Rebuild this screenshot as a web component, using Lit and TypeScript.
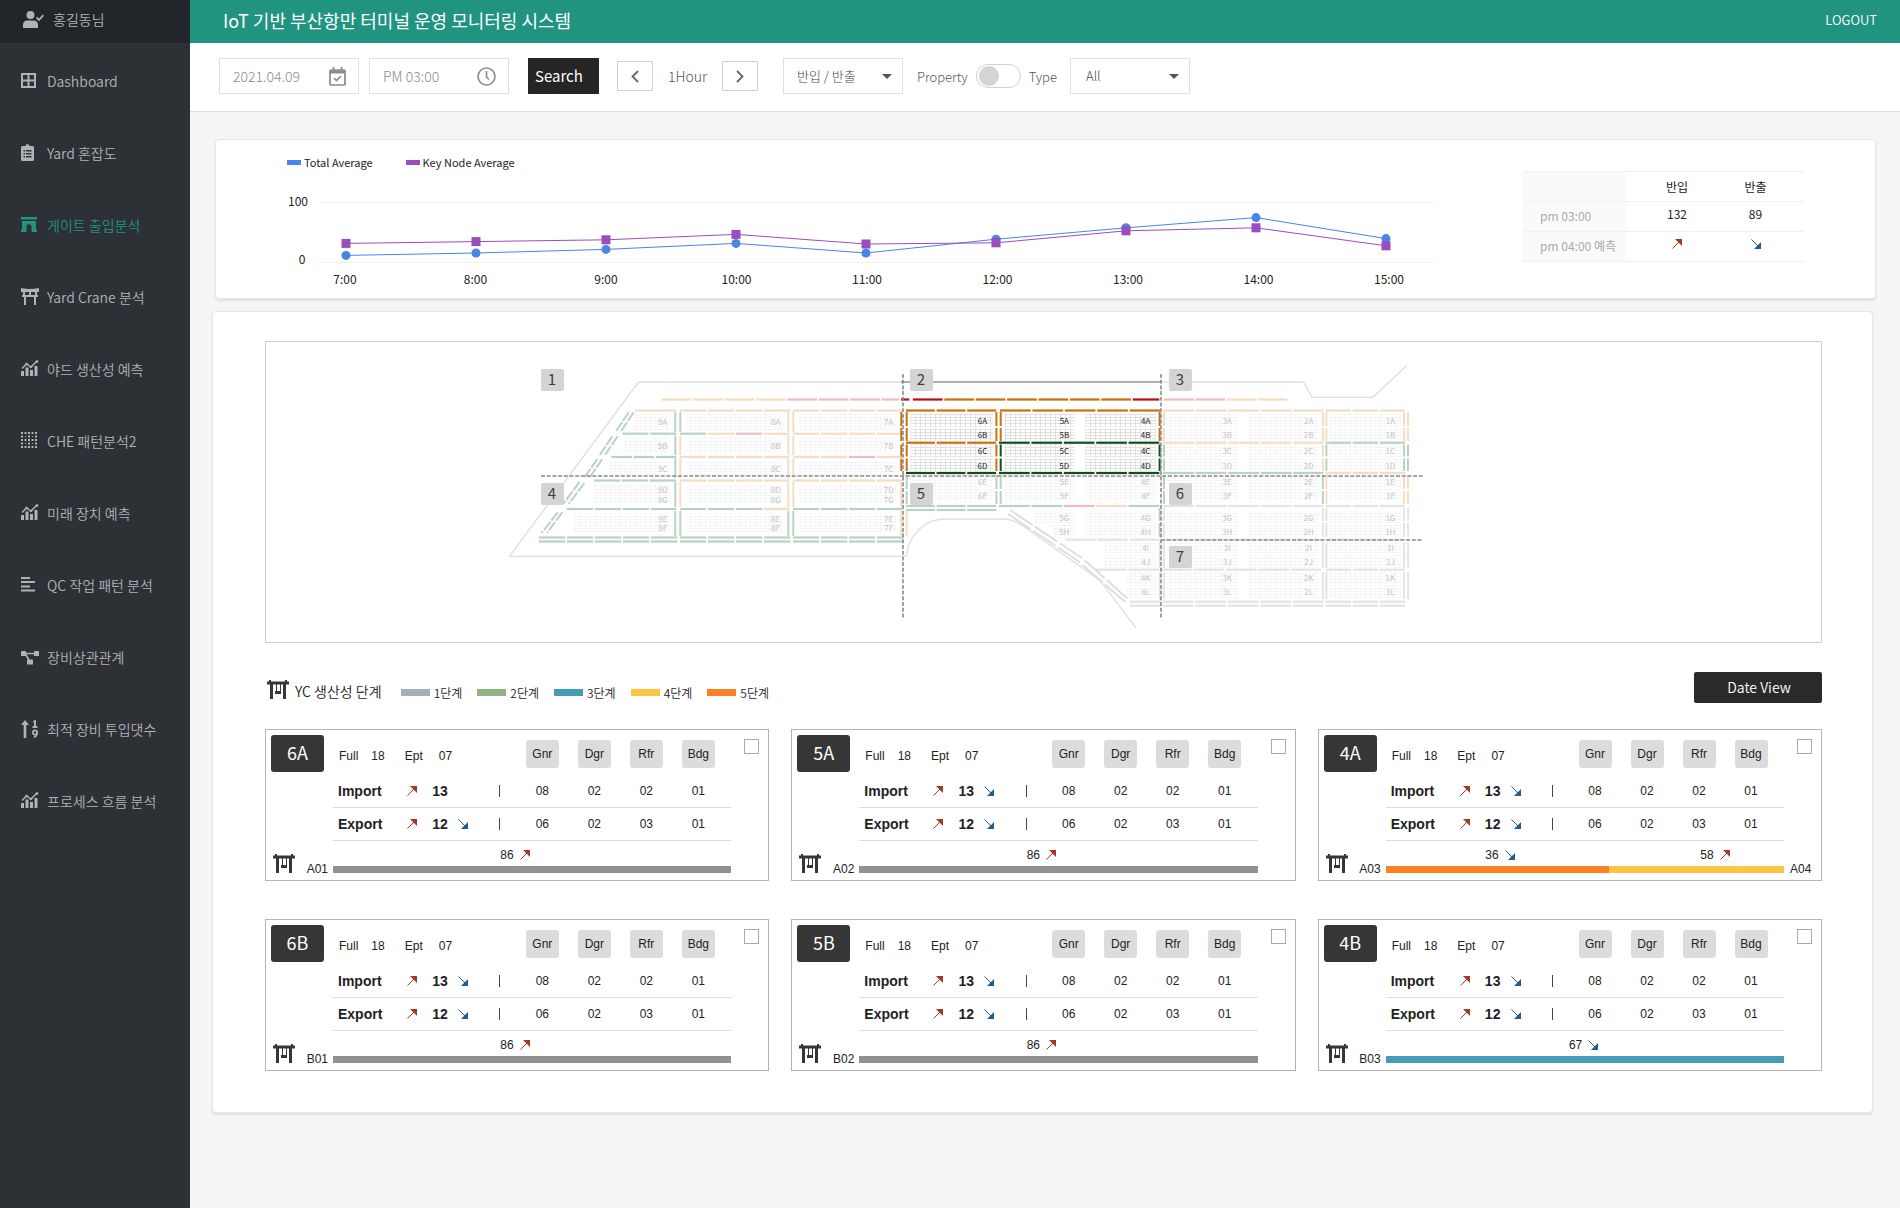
import { LitElement, html, svg, css, nothing } from "lit";
import { customElement, property, state } from "lit/decorators.js";
import { classMap } from "lit/directives/class-map.js";

type Dir = "up" | "down";

const arrow = (dir: Dir) => html`
  <svg class="arrow ${dir}" width="10" height="10" viewBox="0 0 10 10" role="img" aria-label=${dir}>
    ${dir === "up"
      ? svg`<path d="M3 0H10V7Z" fill="currentColor" /><path d="M0.5 9.5L7 3" stroke="currentColor" />`
      : svg`<path d="M3 10H10V3Z" fill="currentColor" /><path d="M0.5 0.5L7 7" stroke="currentColor" />`}
  </svg>
`;

const crane = html`
  <svg class="crane" width="22" height="19" viewBox="0 0 22 19" aria-hidden="true">
    <path
      fill="#363636"
      d="M2 0H4V1.5H18V0H20V1.5H22V4.5H19V19H16V4.5H14V14H8V11H9V4.5H6V19H3V4.5H0V1.5H2ZM10 4.5V11H13V4.5Z"
    />
  </svg>
`;

const trendIcon = svg`
  <path d="M1 8.5L5.5 4L10 7L16 1" fill="none" stroke="currentColor" stroke-width="1.5" />
  <circle cx="5.5" cy="4" r="1.3" /><circle cx="10" cy="7" r="1.3" /><circle cx="16" cy="1.6" r="1.3" />
  <rect x="0" y="11" width="3" height="5" /><rect x="4.5" y="7.5" width="3" height="8.5" />
  <rect x="9" y="10" width="3" height="6" /><rect x="13.5" y="6" width="3" height="10" />`;

const menu = [
  {
    label: "Dashboard",
    icon: svg`<path fill-rule="evenodd" d="M0 1H15V16H0ZM2 3V7.5H6.5V3ZM8.5 3V7.5H13V3ZM2 9.5V14H6.5V9.5ZM8.5 9.5V14H13V9.5Z" />`,
  },
  {
    label: "Yard 혼잡도",
    icon: svg`<path fill-rule="evenodd" d="M1.5 2H4.5C4.5 -0.5 8.5 -0.5 8.5 2H11.5Q13 2 13 3.5V15.5Q13 17 11.5 17H1.5Q0 17 0 15.5V3.5Q0 2 1.5 2ZM2.5 6V7.5H4V6ZM5 6V7.5H10.5V6ZM2.5 9V10.5H4V9ZM5 9V10.5H10.5V9ZM2.5 12V13.5H4V12ZM5 12V13.5H10.5V12Z" />`,
  },
  {
    label: "게이트 출입분석",
    active: true,
    icon: svg`<path d="M0 1H16V3.5H0ZM1 5H15V14H16V16H10.5V11C10.5 7.3 5.5 7.3 5.5 11V16H0V14H1Z" />`,
  },
  {
    label: "Yard Crane 분석",
    icon: svg`<path fill-rule="evenodd" d="M0 0Q9 1.8 18 0V4H16V7H17V9H15V17H13V9H5V17H3V9H1V7H2V4H0ZM4 4V7H8V4ZM10 4V7H14V4Z" />`,
  },
  { label: "야드 생산성 예측", icon: trendIcon },
  {
    label: "CHE 패턴분석2",
    icon: svg`
      <path d="M1 0V16M8 0V16M15 0V16" stroke="currentColor" stroke-width="2" stroke-dasharray="2 1.5" />
      <path d="M3.5 1H12.5M3.5 8H12.5M3.5 15H12.5" stroke="currentColor" stroke-width="2" stroke-dasharray="2 5" />
      <path d="M4 4H5V5H4ZM11 4H12V5H11ZM4 11H5V12H4ZM11 11H12V12H11Z" />`,
  },
  { label: "미래 장치 예측", icon: trendIcon },
  {
    label: "QC 작업 패턴 분석",
    icon: svg`<path d="M0 1H9V3H0ZM0 5H14V7H0ZM0 9.5H9V11.5H0ZM0 13.5H14V15.5H0Z" />`,
  },
  {
    label: "장비상관관계",
    icon: svg`
      <rect x="0" y="3" width="5" height="5" rx="0.5" /><rect x="13" y="3" width="5" height="5" rx="0.5" />
      <rect x="6" y="11.5" width="6" height="5" rx="0.5" /><path d="M4 5.5H14M4.5 6L8 12" stroke="currentColor" stroke-width="1.6" />`,
  },
  {
    label: "최적 장비 투입댓수",
    icon: svg`
      <path d="M4 0L8 5H5.3V18H2.7V5H0Z" />
      <path d="M12 1L14 0H15V6H16.5V8H11.5V6H13V2.2H12Z" />
      <circle cx="14" cy="12.5" r="2.1" fill="none" stroke="currentColor" stroke-width="1.8" />
      <path fill="none" stroke="currentColor" stroke-width="1.8" d="M16.1 12.5Q16.1 15.5 13 17.5" />`,
  },
  { label: "프로세스 흐름 분석", icon: trendIcon },
];

/* ---------- hourly averages ---------- */

const hours = ["7:00", "8:00", "9:00", "10:00", "11:00", "12:00", "13:00", "14:00", "15:00"];
const totalAverage = [11, 15, 21, 31, 15, 38, 57, 74, 39];
const nodeAverage = [31, 34, 37, 46, 30, 32, 52, 57, 27];

@customElement("average-chart")
export class AverageChart extends LitElement {
  static styles = css`
    :host {
      display: block;
      color: #222;
      font-size: 12px;
    }
    .legend {
      display: flex;
      gap: 33px;
      padding: 14px 0 0 71px;
      font-size: 11px;
      line-height: 16px;
    }
    .entry {
      display: flex;
      align-items: center;
      gap: 3px;
    }
    .swatch {
      width: 14px;
      height: 5px;
    }
    .total {
      background: #4a84e8;
    }
    .node {
      background: #9a4dbd;
    }
    .plot {
      display: block;
      width: 100%;
    }
    .plot text {
      text-anchor: middle;
      fill: #222;
    }
  `;

  render() {
    const x = (i: number) => 129 + i * 130;
    const y = (v: number) => 92 - v * 0.6;
    const points = (values: number[]) => values.map((v, i) => `${x(i)},${y(v)}`).join(" ");
    return html`
      <div class="legend">
        <span class="entry"><i class="swatch total"></i>Total Average</span>
        <span class="entry"><i class="swatch node"></i>Key Node Average</span>
      </div>
      <svg class="plot" viewBox="-1 0 1307 120" role="img" aria-label="Average by hour">
        <path d="M102 32.5H1217M102 92.5H1217" stroke="#f0f0f0" />
        <text x="81" y="36">100</text>
        <text x="85" y="94">0</text>
        <polyline points=${points(totalAverage)} fill="none" stroke="#4a84e8" />
        <polyline points=${points(nodeAverage)} fill="none" stroke="#9a4dbd" />
        ${totalAverage.map((v, i) => svg`<circle cx=${x(i)} cy=${y(v)} r="4.5" fill="#4a84e8" />`)}
        ${nodeAverage.map(
          (v, i) => svg`<rect x=${x(i) - 4.5} y=${y(v) - 4.5} width="9" height="9" fill="#9a4dbd" />`,
        )}
        ${hours.map((h, i) => svg`<text x=${128 + i * 130.5} y="114">${h}</text>`)}
      </svg>
    `;
  }
}

/* ---------- terminal map ---------- */

const road: Record<string, string> = {
  o: "#f4ddc2",
  g: "#bad2c2",
  p: "#efbcc0",
  e: "#e4e4e4",
  O: "#cb700c",
  G: "#0d4f1e",
  R: "#b41014",
};

/* A row of road sections: y, first x, last x, section pitch, one colour key per section (the last one repeats). */
const rows: [number, number, number, number, string][] = [
  [399.5, 661.7, 901, 31.4, "oooop"],
  [399.5, 901, 911, 31.4, "R"],
  [399.5, 912.9, 1161, 31.4, "ROOOOOOR"],
  [399.5, 1164, 1289, 31.4, "ppoo"],
  [410.5, 635, 678, 60, "o"],
  [410.5, 680, 793, 28, "o"],
  [410.5, 793, 904, 28, "o"],
  [433.7, 622.3, 678, 28, "g"],
  [433.7, 680, 791, 28, "gopo"],
  [433.7, 793, 904, 28, "o"],
  [457, 611.3, 678, 22.3, "g"],
  [457, 680, 791, 28, "o"],
  [457, 793, 904, 28, "oopo"],
  [480.5, 594, 678, 28, "g"],
  [480.5, 680, 791, 28, "o"],
  [480.5, 793, 904, 28, "o"],
  [509, 566.7, 678, 28, "g"],
  [509, 680, 791, 28, "gggo"],
  [509, 793, 904, 28, "g"],
  [537.5, 539, 680, 28, "g"],
  [537.5, 680, 793, 28, "g"],
  [537.5, 793, 905, 28, "g"],
  [541.5, 539, 680, 28, "g"],
  [541.5, 680, 793, 28, "g"],
  [541.5, 793, 905, 28, "g"],
  [410.5, 906, 998, 30.6, "O"],
  [410.5, 1000, 1162, 32.4, "O"],
  [442.7, 906, 998, 30.6, "O"],
  [442.7, 999, 1162, 32.4, "G"],
  [473, 906, 998, 30.6, "G"],
  [473, 999, 1162, 32.4, "G"],
  [506, 906, 998, 30.6, "g"],
  [506, 999, 1162, 32.4, "ggpog"],
  [510, 906, 998, 30.6, "g"],
  [410.5, 1163, 1325, 32.6, "o"],
  [410.5, 1325.7, 1407, 27, "o"],
  [442.7, 1163, 1325, 32.6, "o"],
  [442.7, 1325.7, 1407, 27, "g"],
  [473, 1163, 1325, 32.6, "g"],
  [473, 1325.7, 1407, 27, "o"],
  [506, 1163, 1325, 32.6, "e"],
  [506, 1325.7, 1407, 27, "e"],
  [539.7, 1065, 1325, 32.4, "e"],
  [539.7, 1325.7, 1407, 27, "e"],
  [569.7, 1096, 1325, 32.4, "e"],
  [569.7, 1325.7, 1407, 27, "e"],
  [601.7, 1130, 1325, 32.6, "e"],
  [601.7, 1325.7, 1407, 27, "e"],
  [605.7, 1130, 1325, 32.6, "e"],
  [605.7, 1325.7, 1407, 27, "e"],
];

/* Upright roads: x, then a colour key for each block row ("-" leaves the row empty). */
const westRows = [[412, 432], [435.5, 455], [458.5, 478], [482, 507], [511, 536]];
const eastRows = [[412, 426], [428, 441], [444.5, 456.5], [458.5, 471], [475, 489], [491, 504], [508, 521], [523, 537], [542, 568], [572, 599]];
const westColumns: [number, string][] = [
  [675.3, "ggggg"], [680.3, "gooog"], [788.3, "oooog"], [793.3, "oooog"], [901.3, "---oo"], [906.7, "----o"],
];
const eastColumns: [number, string][] = [
  [901.3, "OOOO"], [906.7, "OOOOgg"], [996.4, "OOOOgg"], [1000.7, "OOGGgg"], [1159.6, "OOGG--ggee"], [1164, "ooggggeeee"],
  [1322.9, "ooooggeeee"], [1326.4, "ooggooeeee"], [1404, "ooggooeeee"], [1408, "ooggooeeee"],
];

const westLabels = [
  { y: 422.3, top: 414, h: 16, left: 634, names: "A" },
  { y: 445.7, top: 437, h: 16, left: 624.7, names: "B" },
  { y: 469, top: 461, h: 15, left: 609, names: "C" },
  { y: 490, top: 485, h: 18, left: 594, names: "DG" },
  { y: 518.6, top: 513.5, h: 19, left: 573.3, names: "EF" },
];
const eastLetters = "ABCDEFGHIJKL";
const eastY = [421, 435.3, 451.3, 465.7, 481.7, 495.7, 517.7, 532, 548, 562.3, 578.3, 592.3];

@customElement("terminal-map")
export class TerminalMap extends LitElement {
  static styles = css`
    :host {
      display: block;
      border: 1px solid #cfcfcf;
    }
    .map {
      display: block;
      width: 100%;
    }
    .block {
      font-size: 8px;
      text-anchor: middle;
      fill: #c4c4c4;
    }
    .block.on {
      fill: #222;
    }
    .zone {
      font-size: 15px;
      text-anchor: middle;
      fill: #3c3c3c;
    }
  `;

  private row([y, x0, x1, pitch, keys]: [number, number, number, number, string]) {
    const out = [];
    for (let i = 0, x = x0; x < x1 - 3; i++, x += pitch) {
      const key = keys[Math.min(i, keys.length - 1)];
      const w = Math.min(pitch, x1 - x) - 1.7;
      out.push(svg`<rect x=${x} y=${y - 1.1} width=${w} height="2.2" fill=${road[key]} />`);
    }
    return out;
  }

  private column(x: number, keys: string, spans: number[][]) {
    return [...keys].map((key, i) =>
      road[key]
        ? svg`<rect x=${x - 1} y=${spans[i][0]} width="2" height=${spans[i][1] - spans[i][0]} fill=${road[key]} />`
        : nothing,
    );
  }

  private westBlocks() {
    const columns = [
      { n: 9, x: 662.7, left: 0, right: 670 },
      { n: 8, x: 775.7, left: 686, right: 782.7 },
      { n: 7, x: 888.7, left: 799, right: 895.7 },
    ];
    return columns.map((c) =>
      westLabels.map((r) => {
        const left = c.left || r.left;
        return svg`
          <rect x=${left} y=${r.top} width=${c.right - left} height=${r.h} fill="url(#lots)" />
          ${[...r.names].map((l, i) => svg`<text class="block" x=${c.x} y=${r.y + 3 + i * 9.8}>${c.n}${l}</text>`)}`;
      }),
    );
  }

  private eastBlocks() {
    const columns = [
      { n: 6, x: 982.5, left: 910.5, right: 993, to: 6 },
      { n: 5, x: 1064.3, left: 1004.3, right: 1074.6, to: 8 },
      { n: 4, x: 1145.7, left: 1085.4, right: 1155.7, to: 12 },
      { n: 3, x: 1227.2, left: 1166.8, right: 1237.9, to: 12 },
      { n: 2, x: 1308.6, left: 1248.2, right: 1318.9, to: 12 },
      { n: 1, x: 1390.4, left: 1329.6, right: 1400.7, to: 12 },
    ];
    return columns.map((c) =>
      eastY.slice(0, c.to).map((y, i) => {
        const on = c.n > 3 && i < 4;
        let left = c.left;
        if (c.n === 5 && i > 5) left = 1034 + (i - 6) * 18;
        if (c.n === 4 && i > 7) left = i > 9 ? 1126 : 1105;
        return svg`
          <rect x=${left} y=${y - 7} width=${c.right - left} height="12.5" fill=${on ? "url(#lots-on)" : "url(#lots)"} />
          <text class="block ${on ? "on" : ""}" x=${c.x} y=${y + 3}>${c.n}${eastLetters[i]}</text>`;
      }),
    );
  }

  render() {
    const zones = [[541, 369], [910, 369], [1169, 369], [541, 483], [910, 483], [1169, 483], [1169, 546]];
    return html`
      <svg class="map" viewBox="266 342 1555 300" role="img" aria-label="Terminal yard map">
        <defs>
          <pattern id="lots" width="5" height="3" patternUnits="userSpaceOnUse">
            <path d="M0 0.5H5M0.5 0V3" stroke="#f5f5f5" stroke-width="1" />
          </pattern>
          <pattern id="lots-on" width="5" height="3" patternUnits="userSpaceOnUse">
            <path d="M0 0.5H5M0.5 0V3" stroke="#e0e0e0" stroke-width="1" />
          </pattern>
        </defs>
        <g fill="none" stroke="#dfdfdf" stroke-width="1.3">
          <path d="M903 382H638.5L509.5 556.4H906.5C908 535 925 519 945 519H1003Q1013 519 1023 526L1098 579Q1102 582 1105 587L1136 628" />
          <path d="M1161 382H1303.5L1312 397.3H1373L1407 365.3" />
        </g>
        <path d="M901 382H1161" stroke="#959595" stroke-width="1.6" />
        ${this.westBlocks()} ${this.eastBlocks()}
        ${rows.map((r) => this.row(r))}
        ${westColumns.map(([x, keys]) => this.column(x, keys, westRows))}
        ${eastColumns.map(([x, keys]) => this.column(x, keys, eastRows))}
        <g fill="none" stroke=${road.g} stroke-width="2" stroke-dasharray="10.5 1.5">
          <path d="M628.7 412.3L615.7 431.7M633.7 412.3L620.7 431.7" />
          <path d="M612.3 436.3L599.7 455.3M617.7 436.3L604.7 455.3" />
          <path d="M597.3 459L584.7 477.3M602.3 459L589.7 477.3" />
          <path d="M579.7 481.7L563.7 503.3M584.3 483L568.7 504" />
          <path d="M557.7 512.3L541.7 533M562.3 512.3L547 533" />
        </g>
        <g fill="none" stroke="#dedede" stroke-width="2" stroke-dasharray="27 3">
          <path d="M1010 510L1082 558L1129 600" />
          <path d="M1008 514L1078 561L1127 603.5" />
        </g>
        <g stroke="#8a8a8a" stroke-width="1.6" stroke-dasharray="4 1.7">
          <path d="M903 374V619M1161 374V619M541 476H1424M1161 540H1422" />
        </g>
        ${zones.map(
          ([x, y], i) => svg`
            <rect x=${x} y=${y} width="23" height="22" rx="2" fill="#d4d4d4" />
            <text class="zone" x=${x + 11} y=${y + 16}>${i + 1}</text>`,
        )}
      </svg>
    `;
  }
}

/* ---------- block cards ---------- */

interface Bar {
  color: string;
  share: number;
  indent: number;
  value: number;
  dir: Dir;
}

interface Block {
  name: string;
  start: string;
  end?: string;
  importDown: boolean;
  bars: Bar[];
}

const gray: Bar = { color: "#919191", share: 100, indent: 42, value: 86, dir: "up" };

const blocks: Block[] = [
  { name: "6A", start: "A01", importDown: false, bars: [gray] },
  { name: "5A", start: "A02", importDown: true, bars: [gray] },
  {
    name: "4A",
    start: "A03",
    end: "A04",
    importDown: true,
    bars: [
      { color: "#fc8024", share: 56, indent: 25, value: 36, dir: "down" },
      { color: "#fcc644", share: 44, indent: 23, value: 58, dir: "up" },
    ],
  },
  { name: "6B", start: "B01", importDown: true, bars: [gray] },
  { name: "5B", start: "B02", importDown: true, bars: [gray] },
  {
    name: "4B",
    start: "B03",
    importDown: true,
    bars: [{ color: "#479cb8", share: 100, indent: 46, value: 67, dir: "down" }],
  },
];

@customElement("block-card")
export class BlockCard extends LitElement {
  @property({ attribute: false }) block!: Block;

  static styles = css`
    :host {
      display: grid;
      grid-template-columns: 67px 1fr 37px;
      box-sizing: border-box;
      border: 1px solid #b4b4b4;
      padding-bottom: 4px;
      color: #222;
      font-family: "Liberation Sans", Arial, sans-serif;
      font-size: 12px;
      line-height: 14px;
    }
    .badge {
      margin: 5px 0 0 5px;
      width: 53px;
      height: 37px;
      border-radius: 3px;
      background: #363636;
      color: #fff;
      font: 18px/34px "Noto Sans CJK KR", sans-serif;
      text-align: center;
    }
    .stats {
      width: 100%;
      border-collapse: collapse;
      table-layout: fixed;
    }
    .name {
      width: 68px;
    }
    .count {
      width: 52px;
    }
    .last {
      width: 59px;
    }
    th,
    td {
      padding: 0;
      font-weight: normal;
      text-align: center;
    }
    thead th {
      height: 45px;
      vertical-align: top;
    }
    tbody tr {
      border-bottom: 1px solid #dcdcdc;
    }
    tbody th,
    tbody td {
      height: 32px;
    }
    tbody th {
      padding-left: 5px;
      font-size: 14px;
      font-weight: bold;
      text-align: left;
    }
    .totals {
      display: flex;
      gap: 13px;
      padding: 19px 0 0 6px;
    }
    .totals span:nth-child(3) {
      padding-left: 7px;
    }
    .totals span:nth-child(4) {
      padding-left: 3px;
    }
    .chip {
      display: block;
      width: 33px;
      margin: 10px auto 0;
      border-radius: 3px;
      background: #dcdcdc;
      line-height: 28px;
    }
    tr > :last-child {
      padding-right: 7px;
    }
    .flow {
      display: flex;
      align-items: center;
      padding-left: 6px;
    }
    .flow b {
      width: 16px;
      margin: 0 10px 0 15px;
      font-size: 14px;
    }
    .arrow {
      flex: none;
      color: #a23a24;
    }
    .arrow.down {
      color: #235c90;
    }
    .divider {
      width: 1px;
      height: 12px;
      margin: 0 16px 0 auto;
      background: #444;
    }
    .check {
      appearance: none;
      box-sizing: border-box;
      width: 15px;
      height: 15px;
      margin: 9px 9px 0 auto;
      border: 1px solid #aaa;
      background: #fff;
    }
    .check:checked {
      background: #363636;
    }
    .origin {
      display: flex;
      align-items: flex-end;
      justify-content: space-between;
      padding: 0 5px 0 7px;
    }
    .crane {
      margin-bottom: 3px;
    }
    .bars {
      display: flex;
      padding: 7px 0 3px;
    }
    .value {
      display: flex;
      align-items: center;
      gap: 6px;
      margin-bottom: 4px;
    }
    .bar {
      height: 7px;
    }
    .end {
      align-self: end;
      padding-left: 6px;
    }
  `;

  private line(label: string, total: string, down: boolean, counts: string[]) {
    return html`
      <tr>
        <th scope="row">${label}</th>
        <td>
          <div class="flow">
            ${arrow("up")}<b>${total}</b>${down ? arrow("down") : nothing}<i class="divider"></i>
          </div>
        </td>
        ${counts.map((c) => html`<td>${c}</td>`)}
      </tr>
    `;
  }

  render() {
    const b = this.block;
    return html`
      <div class="badge">${b.name}</div>
      <table class="stats">
        <colgroup>
          <col class="name" /><col /><col class="count" /><col class="count" /><col class="count" /><col class="last" />
        </colgroup>
        <thead>
          <tr>
            <th colspan="2">
              <div class="totals"><span>Full</span><span>18</span><span>Ept</span><span>07</span></div>
            </th>
            ${["Gnr", "Dgr", "Rfr", "Bdg"].map((c) => html`<th scope="col"><span class="chip">${c}</span></th>`)}
          </tr>
        </thead>
        <tbody>
          ${this.line("Import", "13", b.importDown, ["08", "02", "02", "01"])}
          ${this.line("Export", "12", true, ["06", "02", "03", "01"])}
        </tbody>
      </table>
      <input class="check" type="checkbox" aria-label="Select ${b.name}" />
      <div class="origin">${crane}<span>${b.start}</span></div>
      <div class="bars">
        ${b.bars.map(
          (s) => html`
            <div style="width:${s.share}%">
              <div class="value" style="padding-left:${(s.indent / s.share) * 100}%">${s.value}${arrow(s.dir)}</div>
              <div class="bar" style="background:${s.color}"></div>
            </div>
          `,
        )}
      </div>
      <div class="end">${b.end ?? nothing}</div>
    `;
  }
}

/* ---------- page ---------- */

const steps = [
  ["1단계", "#a4adbb"],
  ["2단계", "#8fb585"],
  ["3단계", "#479cb8"],
  ["4단계", "#fcc644"],
  ["5단계", "#fc8024"],
];

@customElement("app-root")
export class AppRoot extends LitElement {
  @state() private byType = false;

  static styles = css`
    :host {
      display: grid;
      grid-template-columns: 190px 1fr;
      min-height: 100vh;
      background: #f4f5f7;
      color: #222;
      font-family: "Noto Sans CJK KR", "Noto Sans", sans-serif;
      font-size: 14px;
    }
    button,
    input,
    select {
      box-sizing: border-box;
      margin: 0;
      font: inherit;
    }
    .side {
      background: #2d3035;
      color: #b0b3b5;
      font-weight: 350;
    }
    .user {
      display: flex;
      align-items: center;
      gap: 9px;
      height: 43px;
      padding: 0 0 5px 23px;
      box-sizing: border-box;
      background: #222529;
    }
    .menu {
      margin: 0;
      padding: 2px 0 0;
      list-style: none;
    }
    .link {
      display: grid;
      grid-template-columns: 26px 1fr;
      align-items: center;
      height: 72px;
      padding-left: 21px;
      color: inherit;
      text-decoration: none;
      white-space: nowrap;
    }
    .link.active {
      color: #209480;
    }
    .icon {
      fill: currentColor;
    }
    .top {
      display: flex;
      justify-content: space-between;
      align-items: center;
      height: 43px;
      box-sizing: border-box;
      padding: 0 23px 4px 33px;
      background: #209480;
      color: #fff;
    }
    .title {
      margin: 0;
      font-size: 18px;
      font-weight: 400;
    }
    .logout {
      color: inherit;
      font-size: 13px;
      font-weight: 350;
      text-decoration: none;
    }
    .tools {
      display: flex;
      align-items: center;
      height: 69px;
      box-sizing: border-box;
      padding: 0 29px 2px;
      border-bottom: 1px solid #dcdddf;
      background: #fff;
      color: #555;
      font-size: 13px;
      font-weight: 300;
    }
    .field {
      display: flex;
      align-items: center;
      justify-content: space-between;
      width: 140px;
      height: 36px;
      box-sizing: border-box;
      margin-right: 10px;
      padding: 0 12px 0 13px;
      border: 1px solid #e0e0e0;
      color: #8a8a8a;
    }
    .text {
      width: 80px;
      padding: 0;
      border: 0;
      background: none;
      color: #8a8a8a;
      font-size: 14px;
    }
    .search {
      width: 71px;
      height: 36px;
      margin: 0 18px 0 9px;
      padding: 0 0 2px 7px;
      border: 0;
      background: #252525;
      color: #fff;
      font-size: 15px;
      font-weight: 400;
      text-align: left;
    }
    .step {
      display: flex;
      align-items: center;
      justify-content: center;
      width: 36px;
      height: 30px;
      padding: 0;
      border: 1px solid #d0d0d0;
      background: #fff;
    }
    .hour {
      width: 69px;
      font-size: 14px;
      text-align: center;
    }
    .pick {
      display: grid;
      align-items: center;
    }
    .pick > * {
      grid-area: 1 / 1;
    }
    .select {
      appearance: none;
      width: 120px;
      height: 36px;
      padding: 0 24px 2px 13px;
      border: 1px solid #e0e0e0;
      border-radius: 0;
      background: #fff;
      color: #444;
    }
    .kind {
      padding-left: 15px;
    }
    .caret {
      justify-self: end;
      margin-right: 11px;
      pointer-events: none;
    }
    .first {
      margin: 0 14px 0 25px;
    }
    .second {
      margin-left: 13px;
    }
    .toggle {
      appearance: none;
      width: 45px;
      height: 24px;
      margin: 0 8px;
      padding: 1px;
      border: 1px solid #d0d0d0;
      border-radius: 12px;
      background: #fff;
    }
    .toggle::before {
      content: "";
      display: block;
      width: 20px;
      height: 20px;
      margin-left: 1px;
      border-radius: 50%;
      background: #d4d4d4;
    }
    .toggle:checked::before {
      margin-left: 21px;
    }
    .card {
      border: 1px solid #e6e7e9;
      border-radius: 4px;
      background: #fff;
      box-shadow: 0 2px 2px #dfe0e2;
    }
    .summary {
      display: flex;
      align-items: flex-start;
      height: 158px;
      margin: 27px 24px 12px 25px;
    }
    .chart {
      flex: 1;
    }
    .gate {
      width: 281px;
      margin: 31px 71px 0 0;
      border-collapse: collapse;
      font-size: 12px;
    }
    .gate th,
    .gate td {
      height: 30px;
      box-sizing: border-box;
      padding: 0;
      border: solid #f0f0f0;
      border-width: 1px 0;
      font-weight: 400;
      text-align: center;
    }
    .gate td {
      padding-bottom: 6px;
    }
    .gate .when {
      width: 102px;
      padding: 0 0 3px 17px;
      background: #fafafa;
      color: #aaa;
      text-align: left;
    }
    .gate .in {
      width: 104px;
    }
    .gate .out {
      padding-right: 22px;
    }
    .arrow {
      color: #a23a24;
    }
    .arrow.down {
      color: #235c90;
    }
    .yard {
      margin: 0 27px 95px 22px;
      padding: 29px 50px 41px 52px;
    }
    .steps {
      display: flex;
      align-items: center;
      height: 31px;
      margin: 29px 0 26px;
      padding-left: 2px;
      font-size: 12px;
      font-weight: 350;
    }
    .heading {
      margin: 6px 19px 0 6px;
      font-size: 14px;
      font-weight: 350;
    }
    .level {
      display: flex;
      align-items: center;
      gap: 4px;
      margin: 9px 15px 0 0;
    }
    .steps .crane {
      margin-top: 3px;
    }
    .bar {
      width: 29px;
      height: 7px;
    }
    .view {
      width: 128px;
      height: 31px;
      margin-left: auto;
      border: 0;
      border-radius: 2px;
      padding: 0 0 2px 2px;
      background: #2a2a2a;
      color: #fff;
      font-size: 14px;
    }
    .blocks {
      display: grid;
      grid-template-columns: repeat(3, 1fr);
      gap: 38px 22px;
    }
  `;

  private caret = html`
    <svg class="caret" width="10" height="6" viewBox="0 0 10 6" aria-hidden="true">
      <path d="M0 1H10L5 6Z" fill="#555" />
    </svg>
  `;

  render() {
    return html`
      <aside class="side">
        <div class="user">
          <svg class="icon" width="21" height="17" viewBox="0 0 21 17" aria-hidden="true">
            <circle cx="7.5" cy="4" r="4" />
            <path d="M0 17V14Q0 9.5 4.5 9.5H10.5Q15 9.5 15 14V17Z" />
            <path d="M13.5 6.5L16 9L20.3 4.2" fill="none" stroke="currentColor" stroke-width="1.8" />
          </svg>
          홍길동님
        </div>
        <nav>
          <ul class="menu">
            ${menu.map(
              (m) => html`
                <li>
                  <a class=${classMap({ link: true, active: !!m.active })} href="#">
                    <svg class="icon" width="18" height="18" viewBox="0 0 18 18" aria-hidden="true">${m.icon}</svg>
                    ${m.label}
                  </a>
                </li>
              `,
            )}
          </ul>
        </nav>
      </aside>
      <main>
        <header class="top">
          <h1 class="title">IoT 기반 부산항만 터미널 운영 모니터링 시스템</h1>
          <a class="logout" href="#">LOGOUT</a>
        </header>
        <div class="tools">
          <label class="field">
            <input class="text" type="text" aria-label="Date" value="2021.04.09" />
            <svg width="17" height="19" viewBox="0 0 17 19" fill="none" stroke="currentColor" stroke-width="1.7" aria-hidden="true">
              <rect x="1" y="3" width="15" height="15" rx="1" />
              <path d="M1 5H16" stroke-width="3" /><path d="M4.5 0V4M12.5 0V4" />
              <path d="M5 11L7.5 13.5L12 9" />
            </svg>
          </label>
          <label class="field">
            <input class="text" type="text" aria-label="Time" value="PM 03:00" />
            <svg width="19" height="19" viewBox="0 0 19 19" fill="none" stroke="currentColor" stroke-width="1.6" aria-hidden="true">
              <circle cx="9.5" cy="9.5" r="8.5" /><path d="M9.5 4V10L12 12.5" />
            </svg>
          </label>
          <button class="search">Search</button>
          <button class="step" aria-label="Previous hour">
            <svg width="8" height="13" viewBox="0 0 8 13" aria-hidden="true">
              <path d="M7 1L1.5 6.5L7 12" fill="none" stroke="#666" stroke-width="1.8" />
            </svg>
          </button>
          <span class="hour">1Hour</span>
          <button class="step" aria-label="Next hour">
            <svg width="8" height="13" viewBox="0 0 8 13" aria-hidden="true">
              <path d="M1 1L6.5 6.5L1 12" fill="none" stroke="#666" stroke-width="1.8" />
            </svg>
          </button>
          <div class="pick first">
            <select class="select" aria-label="반입 / 반출"><option>반입 / 반출</option></select>
            ${this.caret}
          </div>
          <label for="mode">Property</label>
          <input
            id="mode"
            class="toggle"
            type="checkbox"
            role="switch"
            .checked=${this.byType}
            @change=${(e: Event) => (this.byType = (e.target as HTMLInputElement).checked)}
          />
          <label for="kind">Type</label>
          <div class="pick second">
            <select id="kind" class="select kind"><option>All</option></select>
            ${this.caret}
          </div>
        </div>
        <section class="card summary">
          <average-chart class="chart"></average-chart>
          <table class="gate">
            <tr>
              <th class="when"></th>
              <th class="in" scope="col">반입</th>
              <th class="out" scope="col">반출</th>
            </tr>
            <tr>
              <th class="when" scope="row">pm 03:00</th>
              <td class="in">132</td>
              <td class="out">89</td>
            </tr>
            <tr>
              <th class="when" scope="row">pm 04:00 예측</th>
              <td class="in">${arrow("up")}</td>
              <td class="out">${arrow("down")}</td>
            </tr>
          </table>
        </section>
        <section class="card yard">
          <terminal-map></terminal-map>
          <div class="steps">
            ${crane}
            <h2 class="heading">YC 생산성 단계</h2>
            ${steps.map(
              ([label, color]) => html`<span class="level"><i class="bar" style="background:${color}"></i>${label}</span>`,
            )}
            <button class="view">Date View</button>
          </div>
          <div class="blocks">${blocks.map((b) => html`<block-card .block=${b}></block-card>`)}</div>
        </section>
      </main>
    `;
  }
}
